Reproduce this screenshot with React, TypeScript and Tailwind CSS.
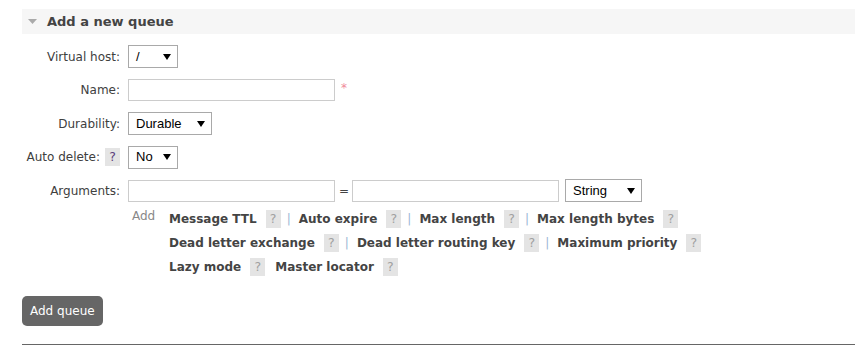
import React from "react";

const Help = ({ dark }: { dark?: boolean }) => (
  <span
    className={`inline-flex items-center justify-center w-[15px] h-[18px] bg-[#e4e4e4] text-[12.5px] ${dark ? "text-[#5d3f7c]" : "text-[#a0a0a0]"}`}
  >
    ?
  </span>
);

const Select = ({ label, w }: { label: string; w: string }) => (
  <div
    className={`${w} h-[23px] border border-[#a9a9a9] bg-white flex items-center justify-between pl-[7px] pr-[6px] font-['Liberation_Sans'] text-[13px] text-black`}
  >
    <span>{label}</span>
    <svg width="8" height="6" viewBox="0 0 8 6">
      <path d="M0 0 L8 0 L4 6 Z" fill="#000" />
    </svg>
  </div>
);

const Input = () => <div className="w-[207px] h-[22px] border border-[#cccccc] bg-white" />;

const Sep = () => <span className="text-[#9bb7d4] ml-[6px] mr-[8px]">|</span>;

const Link = ({ t }: { t: string }) => <span className="font-bold text-[#444] mr-[9px]">{t}</span>;

export default function App() {
  return (
    <div className="w-[855px] h-[346px] bg-white overflow-hidden pt-[9px] pl-[22px] font-['DejaVu_Sans',sans-serif] text-[12px] text-[#404040]">
      <div className="h-[25px] bg-[#f6f6f6] flex items-center">
        <svg width="9" height="5" viewBox="0 0 9 5" className="ml-[6px]">
          <path d="M0 0 L9 0 L4.5 5 Z" fill="#aaaaaa" />
        </svg>
        <span className="ml-[10px] font-bold text-[13px] text-[#444]">Add a new queue</span>
      </div>
      <div className="mt-[6px] grid grid-cols-[98px_1fr] gap-x-[8px]">
        <div className="h-[33px] flex items-center justify-end">Virtual host:</div>
        <div className="h-[33px] flex items-center">
          <Select label="/" w="w-[50px]" />
        </div>
        <div className="h-[34px] flex items-center justify-end">Name:</div>
        <div className="h-[34px] flex items-center">
          <Input />
          <span className="ml-[6px] text-[#f08a9a] text-[12px] mt-[-4px]">*</span>
        </div>
        <div className="h-[33px] flex items-center justify-end">Durability:</div>
        <div className="h-[33px] flex items-center">
          <Select label="Durable" w="w-[84px]" />
        </div>
        <div className="h-[34px] flex items-center justify-end gap-[5px]">
          <span>Auto delete:</span>
          <Help dark />
        </div>
        <div className="h-[34px] flex items-center">
          <Select label="No" w="w-[50px]" />
        </div>
        <div className="h-[33px] flex items-center justify-end">Arguments:</div>
        <div className="h-[33px] flex items-center">
          <Input />
          <span className="ml-[4px] mr-[3px] text-[#444]">=</span>
          <Input />
          <div className="ml-[6px]">
            <Select label="String" w="w-[77px]" />
          </div>
        </div>
        <div />
        <div className="flex">
          <span className="ml-[4px] w-[37px] text-[#888] h-[24px] flex items-center -mt-[3px]">Add</span>
          <div className="flex flex-col">
            <div className="h-[24px] flex items-center">
              <Link t="Message TTL" />
              <Help />
              <Sep />
              <Link t="Auto expire" />
              <Help />
              <Sep />
              <Link t="Max length" />
              <Help />
              <Sep />
              <Link t="Max length bytes" />
              <Help />
            </div>
            <div className="h-[24px] flex items-center">
              <Link t="Dead letter exchange" />
              <Help />
              <Sep />
              <Link t="Dead letter routing key" />
              <Help />
              <Sep />
              <Link t="Maximum priority" />
              <Help />
            </div>
            <div className="h-[24px] flex items-center">
              <Link t="Lazy mode" />
              <Help />
              <span className="w-[10px]" />
              <Link t="Master locator" />
              <Help />
            </div>
          </div>
        </div>
      </div>
      <div className="mt-[17px]">
        <button className="h-[30px] px-[8px] rounded-[5px] bg-[#666666] text-white text-[12px] block">Add queue</button>
      </div>
      <div className="mt-[18px] h-px bg-[#666666]" />
    </div>
  );
}
